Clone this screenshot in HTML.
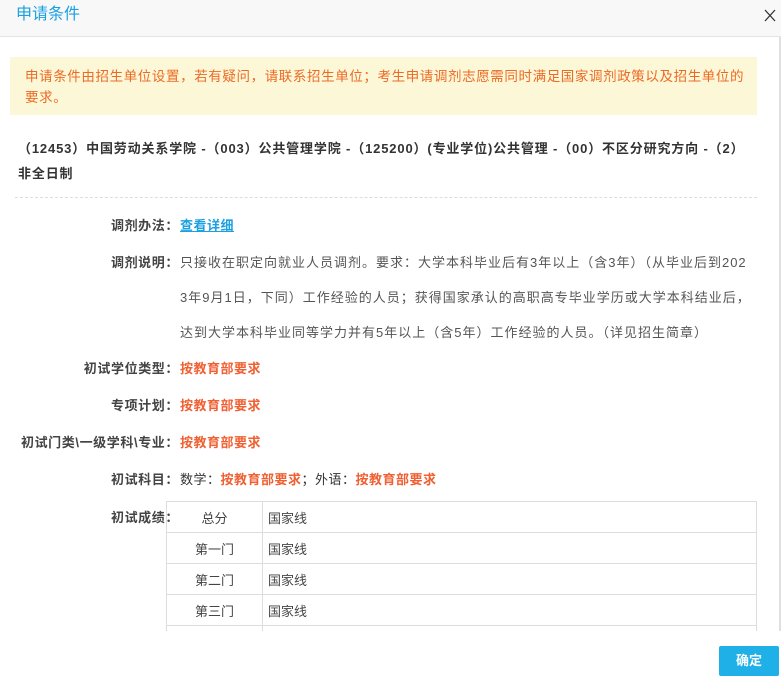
<!DOCTYPE html>
<html><head><meta charset="utf-8"><style>
*{margin:0;padding:0;box-sizing:border-box}
body{width:781px;height:686px;background:#fff;font-family:"Liberation Sans","Noto Sans CJK SC",sans-serif;font-size:13px;color:#333;position:relative;overflow:hidden}
.hd{position:absolute;left:0;top:0;width:781px;height:37px;background:#f8f8f8;border-bottom:1px solid #e5e5e5}
.hd .t{position:absolute;left:16px;top:5px;font-size:16px;color:#1ba0e1;line-height:20px}
.hd svg{position:absolute;left:764px;top:9px}
.sb{position:absolute;left:779px;top:37px;width:2px;height:594px;background:#e0e0e0}
.note{position:absolute;left:10px;top:57px;width:747px;height:58px;background:#fcf7d6;color:#ec6a25;padding:9px 0 0 15px;line-height:21px;font-size:13.5px;letter-spacing:.6px;white-space:nowrap}
.h2{position:absolute;left:18px;top:136px;width:760px;font-weight:bold;line-height:25px;color:#333;letter-spacing:.85px;white-space:nowrap}
.dash{position:absolute;left:15px;top:197px;width:742px;border-top:1px dashed #ddd}
.row{position:absolute;left:0;width:781px;line-height:20px}
.row .l{position:absolute;right:602px;white-space:nowrap;font-weight:bold;color:#444;letter-spacing:.6px}
.row .v{position:absolute;left:180px;width:590px;white-space:nowrap;letter-spacing:.5px}
.o{color:#f06032;font-weight:bold}
a{color:#1ba0e1;font-weight:bold;text-decoration:underline}
table{position:absolute;left:166px;width:591px;border-collapse:collapse}
td{border:1px solid #ddd;height:31px;padding:0 5px;color:#444}
td.c{width:96px;text-align:center}
.clip{position:absolute;left:0;top:501px;width:781px;height:130px;overflow:hidden}
.btn{position:absolute;left:719px;top:646px;width:60px;height:30px;background:#1fb0e8;color:#fff;font-weight:bold;text-align:center;line-height:30px;border-radius:2px}
</style></head><body>
<div class="hd"><div class="t">申请条件</div><svg width="12" height="13" viewBox="0 0 12 13"><path d="M1 1L11 12M11 1L1 12" stroke="#333" stroke-width="1.3"/></svg></div>
<div class="sb"></div>
<div class="note">申请条件由招生单位设置，若有疑问，请联系招生单位；考生申请调剂志愿需同时满足国家调剂政策以及招生单位的<br>要求。</div>
<div class="h2">（12453）中国劳动关系学院 -（003）公共管理学院 -（125200）(专业学位)公共管理 -（00）不区分研究方向 -（2）<br>非全日制</div>
<div class="dash"></div>
<div class="row" style="top:216px"><span class="l">调剂办法：</span><span class="v"><a>查看详细</a></span></div>
<div class="row" style="top:245px;line-height:35px"><span class="l">调剂说明：</span><span class="v" style="color:#555;letter-spacing:1px">只接收在职定向就业人员调剂。要求：大学本科毕业后有3年以上（含3年）（从毕业后到202<br>3年9月1日，下同）工作经验的人员；获得国家承认的高职高专毕业学历或大学本科结业后，<br>达到大学本科毕业同等学力并有5年以上（含5年）工作经验的人员。（详见招生简章）</span></div>
<div class="row" style="top:359px"><span class="l">初试学位类型：</span><span class="v o">按教育部要求</span></div>
<div class="row" style="top:396px"><span class="l">专项计划：</span><span class="v o">按教育部要求</span></div>
<div class="row" style="top:433px"><span class="l">初试门类\一级学科\专业：</span><span class="v o">按教育部要求</span></div>
<div class="row" style="top:470px"><span class="l">初试科目：</span><span class="v">数学：<span class="o">按教育部要求</span>；外语：<span class="o">按教育部要求</span></span></div>
<div class="row" style="top:508px"><span class="l">初试成绩：</span></div>
<div class="clip"><table style="top:0">
<tr><td class="c">总分</td><td>国家线</td></tr>
<tr><td class="c">第一门</td><td>国家线</td></tr>
<tr><td class="c">第二门</td><td>国家线</td></tr>
<tr><td class="c">第三门</td><td>国家线</td></tr>
<tr><td class="c">第四门</td><td>国家线</td></tr>
</table></div>
<div class="btn">确定</div>
</body></html>
